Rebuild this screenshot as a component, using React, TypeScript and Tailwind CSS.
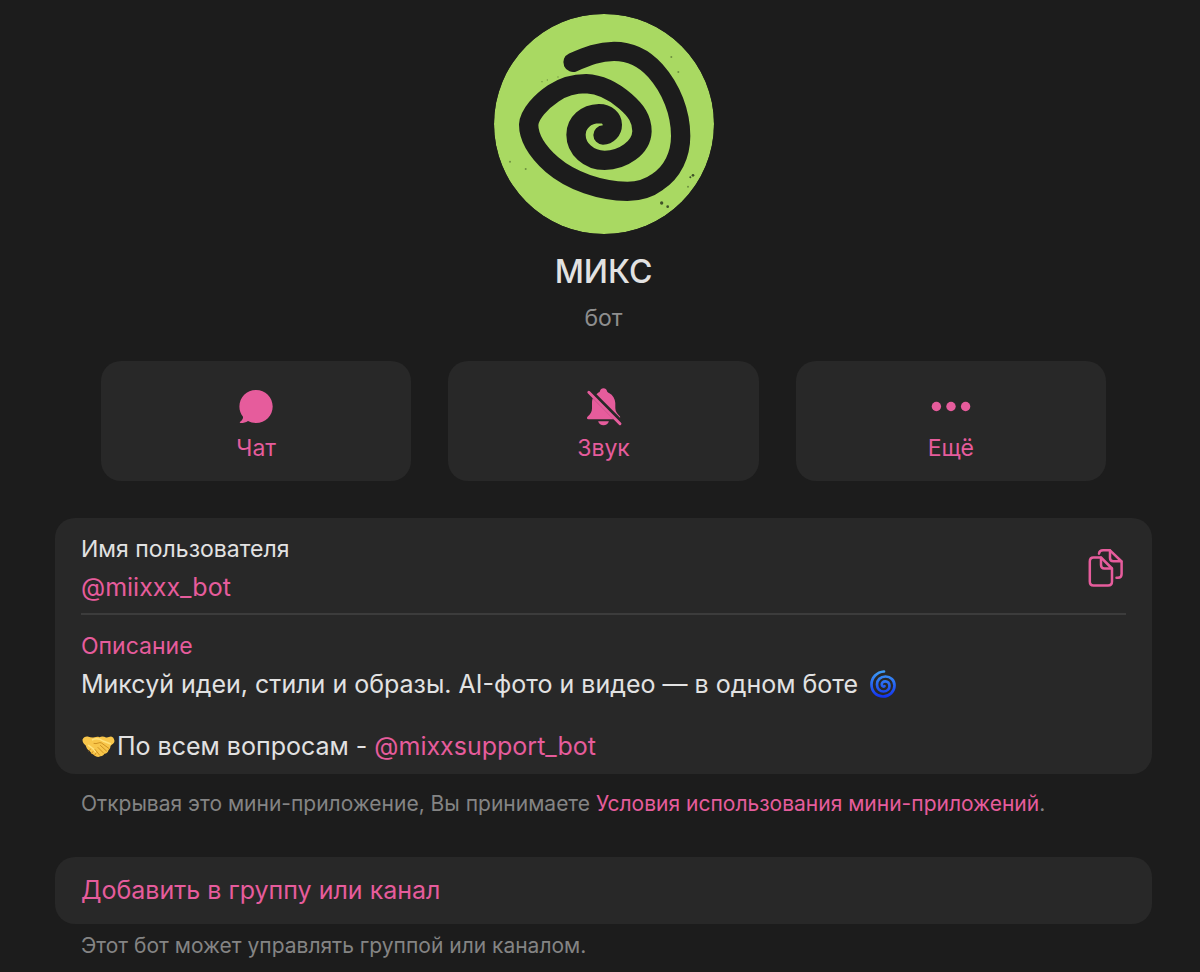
import React from 'react';

const Avatar = () => (
  <svg viewBox="30 30 660 660" className="size-[220px] rounded-full" role="img" aria-label="МИКС">
    <circle cx="360" cy="360" r="330" fill="#a9d962" />
    <path
      d="M267 175C310 156 345 142 390 142C440 142 482 164 514 200C562 254 590 326 590 396C590 452 566 504 520 534C496 552 470 562 430 562C350 561 262 532 204 482C166 448 134 404 134 362C136 330 172 292 208 268C238 248 270 239 306 239C348 241 390 262 424 292C456 320 474 344 474 382C472 432 416 469 362 469C314 469 276 434 276 392C276 356 306 330 345 329C370 329 385 344 385 362C385 380 371 393 357 393"
      fill="none"
      stroke="#1c1c1c"
      strokeWidth="58"
      strokeLinecap="round"
      strokeLinejoin="round"
    />
    <g fill="#3f5228">
      <circle cx="533" cy="597" r="5" />
      <circle cx="551" cy="608" r="4" />
      <circle cx="627" cy="514" r="4" />
      <circle cx="619" cy="520" r="3" />
    </g>
    <g fill="#6f9140">
      <circle cx="612" cy="548" r="3" />
      <circle cx="562" cy="159" r="3" />
      <circle cx="583" cy="204" r="3" />
      <circle cx="78" cy="473" r="3" />
      <circle cx="125" cy="495" r="3" />
      <circle cx="190" cy="228" r="2" />
      <circle cx="174" cy="233" r="2" />
      <circle cx="222" cy="219" r="2" />
    </g>
  </svg>
);

const ChatIcon = () => (
  <svg viewBox="0 0 40 40" className="size-10" fill="currentColor" aria-hidden="true">
    <path d="M20 3C29.300 3 36.700 10.300 36.700 19.500C36.700 28.700 29.300 36 20 36C17 36 14.200 35.300 12 34C9.700 35.500 7 36.100 4.400 36C3.600 35.900 3.600 35.300 4.200 34.800C6.300 33.200 7.200 31.700 7 29.800C4.700 27 3.400 23.500 3.400 19.500C3.400 10.300 10.700 3 20 3Z" />
  </svg>
);

const MutedIcon = () => (
  <svg viewBox="0 0 40 40" className="size-10" fill="currentColor" aria-hidden="true">
    <path d="M14.900 6C15.600 5.400 16.600 5.200 16.800 4.500C17.400 2.300 18.700 1.200 20.500 1.200C22.300 1.200 23.600 2.300 24.200 4.500C24.400 5.200 25.200 5.500 26 6C30 8.200 32 11.600 32.300 16V21C32.400 24.500 34 26.600 36.300 28.700C37.200 29.500 37.400 30.100 37 30.800L13.500 7.300Z" />
    <path d="M9.800 11.200L30.800 32.200H5.500C3.700 32.200 3.500 30.500 4.700 29.400C7.500 27 9 25 9 21.500V16C9 14 9.200 12.600 9.800 11.200Z" />
    <path d="M15.100 34.300H25.900C25.100 36.900 23.100 38.300 20.500 38.300C17.900 38.300 15.900 36.900 15.100 34.300Z" />
    <path d="M5.800 5.200L37 36.800" stroke="currentColor" strokeWidth="2.900" strokeLinecap="round" />
  </svg>
);

const MoreIcon = () => (
  <svg viewBox="0 0 40 40" className="size-10" fill="currentColor" aria-hidden="true">
    <circle cx="5.400" cy="19.500" r="4.700" />
    <circle cx="20" cy="19.500" r="4.700" />
    <circle cx="34.600" cy="19.500" r="4.700" />
  </svg>
);

const CopyIcon = () => (
  <svg
    viewBox="0 0 36 40"
    className="h-10 w-9"
    fill="none"
    stroke="currentColor"
    strokeWidth="2.500"
    strokeLinecap="round"
    strokeLinejoin="round"
    aria-hidden="true">
    <path d="M5.500 8.500H13L24 19.500V32.500Q24 36.500 20 36.500H5.500Q1.800 36.500 1.800 32.500V12.500Q1.800 8.500 5.500 8.500Z" />
    <path d="M13 8.800V16Q13 19.500 16.500 19.500H23.700" />
    <path d="M11 4.700Q11.300 1.300 15 1.300H22L33.600 12.500V25Q33.600 28.800 30 28.800H28.500" />
    <path d="M22 1.500V9Q22 12.300 25.500 12.300H33.200" />
  </svg>
);

const Cyclone = () => (
  <svg viewBox="0 0 28 30" className="ml-1 inline-block h-[30px] w-7 align-[-6px]" role="img" aria-label="🌀">
    <defs>
      <linearGradient id="cyclone" x1="0" y1="0" x2="0" y2="1">
        <stop offset="0" stopColor="#3d9bf5" />
        <stop offset="1" stopColor="#1436f0" />
      </linearGradient>
    </defs>
    <path
      d="M15 2.500C8 3 2.500 8.500 2.500 15.500C2.500 22.500 7.500 27.500 14 27.500C20.500 27.500 25.500 22.500 25.500 16.500C25.500 11 21.500 7.500 16.500 7.500C11.500 7.500 8 11 8 15.500C8 19.700 11 22.500 14.500 22.500C18 22.500 20.500 20 20.500 17C20.500 14 18.500 12.300 16.300 12.300C14 12.300 12.500 14 12.800 15.800C13 17.300 14.500 18 15.500 17.200"
      fill="none"
      stroke="url(#cyclone)"
      strokeWidth="2.700"
      strokeLinecap="round"
    />
  </svg>
);

const Handshake = () => (
  <svg viewBox="0 0 36 24" className="inline-block h-6 w-9 align-[-4px]" role="img" aria-label="🤝">
    <path
      d="M1.500 4.500C2.500 2 5 1 7.500 1.700C9.500 2.400 11 2.800 13.500 2.200C15.500 1.600 17 1.500 18.500 2.200C20.500 1.200 23 1.500 25 2.400C27 2.900 28 1.600 30 1.600C32 1.800 33 3.500 33.500 6C33.500 8 31 9.500 29.500 11C29.500 13 28.500 14 27.500 15.300C27 17.500 25.500 18.500 23.500 18.800C22.500 20.500 21 21.400 19.200 21.200C17.500 22.500 15 21.800 13.500 20.300C11.500 19.700 10 18 8.500 15.800C6 14.500 5.500 12.500 4.700 10.500C3 9 1.200 7 1.500 4.500Z"
      fill="#f8c64a"
    />
    <path d="M7 10C9.500 12 13 13.500 15 17.500M11 5C15 3 19 4 22 6L30 9" fill="none" stroke="#ffe27c" strokeWidth="1.500" />
    <path
      d="M13 8.500C16 9.500 18.500 6.500 20.500 8L28 13.500M19.500 10.500L25.500 16M17 12.500L22.500 18M14 14.500L18.500 20M9.500 14L8 16M12 16.500L10.500 18.500M15 18L13.500 20.500"
      fill="none"
      stroke="#c98b1e"
      strokeWidth="0.900"
      strokeLinecap="round"
    />
  </svg>
);

const actions = [
  { label: 'Чат', Icon: ChatIcon },
  { label: 'Звук', Icon: MutedIcon },
  { label: 'Ещё', Icon: MoreIcon },
];

const App = () => {
  return (
    <main className="min-h-screen bg-[#1c1c1c] pt-[14px] pr-12 pb-2 pl-[55px] font-['Inter','Liberation_Sans',sans-serif] text-[#e2e2e2]">
      <header className="flex flex-col items-center">
        <Avatar />
        <h1 className="mt-4 text-[32px] leading-11 font-medium">МИКС</h1>
        <p className="mt-2 text-[23px] leading-8 text-[#8e8e8e]">бот</p>
      </header>

      <div className="mt-[27px] grid grid-cols-3 gap-[37px] px-[46px]">
        {actions.map(({ label, Icon }) => (
          <button
            key={label}
            type="button"
            className="flex h-[120px] cursor-pointer flex-col items-center rounded-[20px] bg-[#282828] pt-[26px] text-[23px] leading-8 text-[#e65c9c]">
            <Icon />
            <span className="mt-[5px]">{label}</span>
          </button>
        ))}
      </div>

      <section className="mt-[37px] rounded-[20px] bg-[#282828] px-[26px] pt-[15px] pb-[10px]">
        <div className="flex items-center justify-between border-b-2 border-[#3c3c3c] pb-2">
          <div>
            <h2 className="text-[23px] leading-8">Имя пользователя</h2>
            <a href="#username" className="mt-1 block text-[25px] leading-9 text-[#e65c9c]">
              @miixxx_bot
            </a>
          </div>
          <button type="button" aria-label="Скопировать" className="mr-[2px] cursor-pointer text-[#e65c9c]">
            <CopyIcon />
          </button>
        </div>
        <h2 className="mt-[15px] text-[23px] leading-8 text-[#e65c9c]">Описание</h2>
        <p className="mt-1 text-[25px] leading-9">
          Миксуй идеи, стили и образы. AI-фото и видео — в одном боте <Cyclone />
        </p>
        <p className="mt-[26px] text-[25px] leading-9">
          <Handshake />
          По всем вопросам -{' '}
          <a href="#support" className="text-[#e65c9c]">
            @mixxsupport_bot
          </a>
        </p>
      </section>
      <p className="mt-4 px-[26px] text-[21px] leading-7 text-[#848484]">
        Открывая это мини-приложение, Вы принимаете{' '}
        <a href="#terms" className="text-[#e65c9c]">
          Условия использования мини-приложений
        </a>
        .
      </p>

      <button
        type="button"
        className="mt-[39px] block w-full cursor-pointer rounded-[20px] bg-[#282828] px-[26px] pt-[15px] pb-4 text-left text-[25px] leading-9 text-[#e65c9c]">
        Добавить в группу или канал
      </button>
      <p className="mt-2 px-[26px] text-[21px] leading-7 text-[#848484]">
        Этот бот может управлять группой или каналом.
      </p>
    </main>
  );
};
export default App;
